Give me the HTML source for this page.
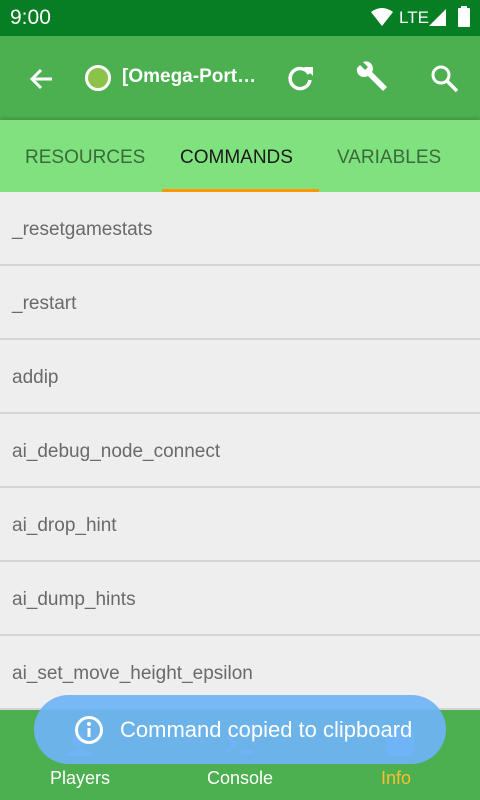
<!DOCTYPE html><html><head><style>
*{margin:0;padding:0;box-sizing:border-box}
body{width:480px;height:800px;overflow:hidden;background:#eeeeee;font-family:"Liberation Sans",sans-serif;position:relative}
.sb{position:absolute;top:0;left:0;width:480px;height:36px;background:#077d24;color:#fff}
.ab{position:absolute;top:36px;left:0;width:480px;height:84px;background:#4caf50;color:#fff}
.tabs{position:absolute;top:120px;left:0;width:480px;height:72px;background:#80e27e;box-shadow:0 -2px 3px rgba(0,0,0,.15)}
.tab{position:absolute;top:27px;font-size:19px;color:#3a6a3c}
.row{position:absolute;left:0;width:480px;height:74px;border-bottom:2px solid #d4d4d4;font-size:19px;color:#6a6a6a;padding:27px 0 0 12px}
.nav{position:absolute;top:710px;left:0;width:480px;height:90px;background:#4caf50}
.nl{position:absolute;top:58px;font-size:18px;color:#fff}
.toast{position:absolute;left:34px;top:695px;width:412px;height:69px;border-radius:35px;background:rgba(110,180,245,.93);color:#fff;font-size:22px}
</style></head><body>
<div class="sb"><span style="position:absolute;left:10px;top:6px;font-size:21px">9:00</span>
<svg style="position:absolute;left:370px;top:7px" width="24" height="20"><path d="M1 5Q12-3 23 5L12 19Z" fill="#fff"/></svg>
<span style="position:absolute;left:399px;top:8px;font-size:17px">LTE</span>
<svg style="position:absolute;left:428px;top:7px" width="20" height="20"><path d="M1 19L18 2V19Z" fill="#fff"/></svg>
<svg style="position:absolute;left:458px;top:6px" width="12" height="22"><rect x="0" y="2" width="12" height="19" rx="1" fill="#fff"/><rect x="3" y="0" width="6" height="3" fill="#fff"/></svg></div>
<div class="ab">
<svg style="position:absolute;left:28px;top:29px" width="28" height="28"><path d="M24 14H4M13 5L4 14L13 23" stroke="#fff" stroke-width="3" fill="none"/></svg>
<div style="position:absolute;left:85px;top:29px;width:26px;height:26px;border-radius:50%;background:#8bc34a;border:3px solid #fff"></div>
<span style="position:absolute;left:122px;top:30px;font-size:19px;font-weight:bold">[Omega-Port…</span>
<svg style="position:absolute;left:286px;top:27px" width="30" height="30"><path d="M23 11A10 10 0 1 0 24 17" stroke="#fff" stroke-width="3.5" fill="none"/><path d="M18 4H27V13Z" fill="#fff"/></svg>
<svg style="position:absolute;left:354px;top:24px" width="36" height="36"><path d="M6 5L11 10L14 7L9 2Q15 0 18 5Q20 9 18 12L33 27L29 31L14 16Q10 18 6 16Q2 13 3 8Z" fill="#fff"/></svg>
<svg style="position:absolute;left:429px;top:27px" width="32" height="32"><circle cx="12" cy="12" r="8" stroke="#fff" stroke-width="3" fill="none"/><path d="M18 18L28 28" stroke="#fff" stroke-width="3.5"/></svg>
</div>
<div class="tabs">
<span class="tab" style="left:25px">RESOURCES</span>
<span class="tab" style="left:180px;color:#1a1a1a">COMMANDS</span>
<span class="tab" style="left:337px">VARIABLES</span>
<div style="position:absolute;left:162px;top:69px;width:157px;height:3px;background:#ff9800"></div>
</div>
<div class="row" style="top:192px">_resetgamestats</div>
<div class="row" style="top:266px">_restart</div>
<div class="row" style="top:340px">addip</div>
<div class="row" style="top:414px">ai_debug_node_connect</div>
<div class="row" style="top:488px">ai_drop_hint</div>
<div class="row" style="top:562px">ai_dump_hints</div>
<div class="row" style="top:636px">ai_set_move_height_epsilon</div>
<div class="nav">
<svg style="position:absolute;left:62px;top:24px" width="34" height="22"><circle cx="17" cy="6" r="7" fill="#6fb5f3"/><path d="M2 22Q17 8 32 22Z" fill="#6fb5f3"/></svg>
<svg style="position:absolute;left:225px;top:24px" width="30" height="22"><path d="M2 2L10 10L2 18" stroke="#6fb5f3" stroke-width="4" fill="none"/><rect x="16" y="16" width="12" height="4" fill="#6fb5f3"/></svg>
<div style="position:absolute;left:386px;top:20px;width:28px;height:26px;background:#6fb5f3;border-radius:3px"></div>
<span class="nl" style="left:50px">Players</span>
<span class="nl" style="left:207px">Console</span>
<span class="nl" style="left:381px;color:#fbc02d">Info</span>
</div>
<div class="toast">
<svg style="position:absolute;left:40px;top:20px" width="30" height="30"><circle cx="15" cy="15" r="12.5" stroke="#fff" stroke-width="3" fill="none"/><rect x="13.5" y="13" width="3" height="9" fill="#fff"/><circle cx="15" cy="9" r="2" fill="#fff"/></svg>
<span style="position:absolute;left:86px;top:22px">Command copied to clipboard</span>
</div>
</body></html>
